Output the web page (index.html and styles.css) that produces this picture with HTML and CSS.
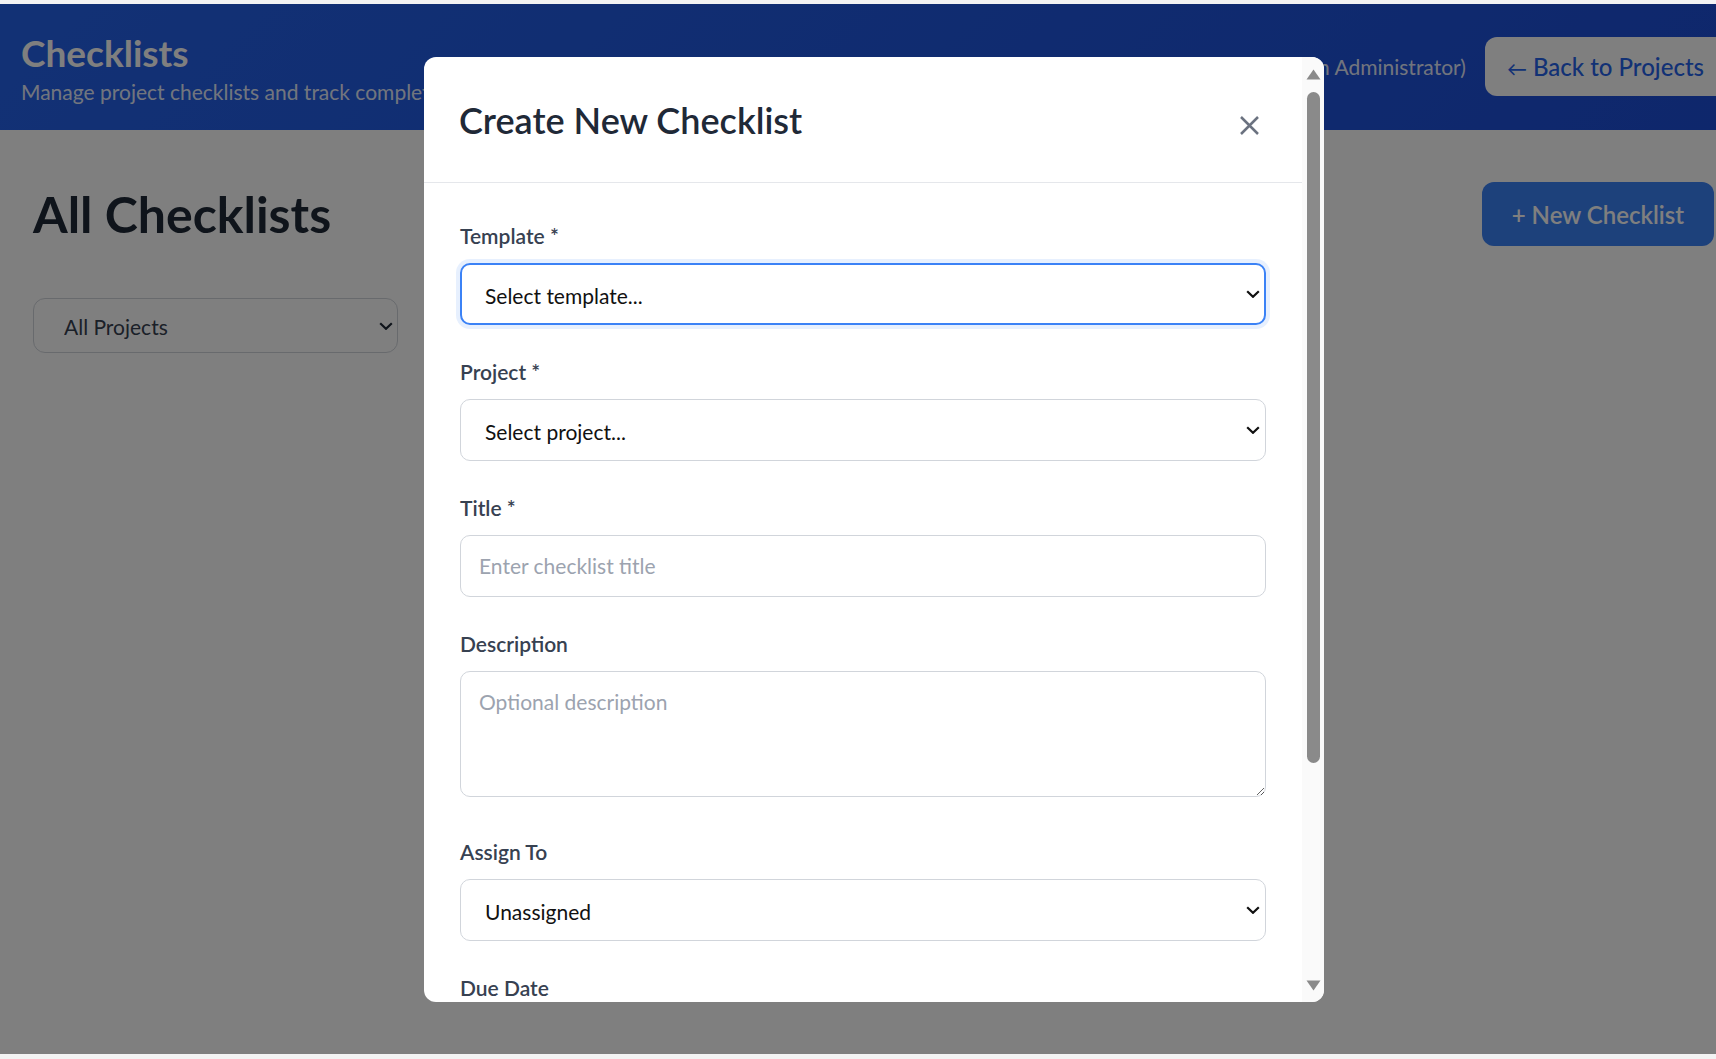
FILE: index.html
```html
<!DOCTYPE html>
<html lang="en">
<head>
<meta charset="utf-8">
<title>Checklists</title>
<link rel="stylesheet" href="styles.css">
</head>
<body>
<div class="viewport">
  <header class="app-header">
    <div class="brand">
      <h1 class="brand-title">Checklists</h1>
      <p class="brand-sub">Manage project checklists and track completion progress</p>
    </div>
    <div class="header-actions">
      <span class="user-info">Welcome, Admin (Admin Administrator)</span>
      <button class="btn-back" type="button"><span class="back-arrow">←</span> Back to Projects</button>
    </div>
  </header>

  <main class="main">
    <div class="title-row">
      <h2 class="page-title">All Checklists</h2>
      <button class="btn-primary" type="button">+ New Checklist</button>
    </div>
    <div class="filters">
      <div class="select-wrap filter-wrap">
        <select class="filter-select"><option>All Projects</option></select>
        <svg class="chevron" width="14" height="8" viewBox="0 0 14 8"><path d="M1.2 1.2 L7 6.8 L12.8 1.2" fill="none" stroke="currentColor" stroke-width="2.2"/></svg>
      </div>
      <div class="select-wrap filter-wrap">
        <select class="filter-select"><option>All Statuses</option></select>
        <svg class="chevron" width="14" height="8" viewBox="0 0 14 8"><path d="M1.2 1.2 L7 6.8 L12.8 1.2" fill="none" stroke="currentColor" stroke-width="2.2"/></svg>
      </div>
    </div>
  </main>

  <div class="overlay">
    <div class="modal">
      <div class="modal-scroll">
        <div class="modal-header">
          <h3 class="modal-title">Create New Checklist</h3>
          <button class="modal-close" type="button" aria-label="Close">
            <svg width="21" height="21" viewBox="0 0 21 21"><path d="M2 2 L19 19 M19 2 L2 19" fill="none" stroke="currentColor" stroke-width="2.5"/></svg>
          </button>
        </div>
        <form class="modal-body">
          <div class="form-group">
            <label class="form-label">Template *</label>
            <div class="select-wrap">
              <select class="form-control form-select is-focused"><option>Select template...</option></select>
              <svg class="chevron" width="14" height="8" viewBox="0 0 14 8"><path d="M1.2 1.2 L7 6.8 L12.8 1.2" fill="none" stroke="currentColor" stroke-width="2.2"/></svg>
            </div>
          </div>
          <div class="form-group">
            <label class="form-label">Project *</label>
            <div class="select-wrap">
              <select class="form-control form-select"><option>Select project...</option></select>
              <svg class="chevron" width="14" height="8" viewBox="0 0 14 8"><path d="M1.2 1.2 L7 6.8 L12.8 1.2" fill="none" stroke="currentColor" stroke-width="2.2"/></svg>
            </div>
          </div>
          <div class="form-group">
            <label class="form-label">Title *</label>
            <input class="form-control form-input" type="text" placeholder="Enter checklist title">
          </div>
          <div class="form-group form-group-tall">
            <label class="form-label">Description</label>
            <textarea class="form-control form-textarea" placeholder="Optional description"></textarea>
          </div>
          <div class="form-group">
            <label class="form-label">Assign To</label>
            <div class="select-wrap">
              <select class="form-control form-select"><option>Unassigned</option></select>
              <svg class="chevron" width="14" height="8" viewBox="0 0 14 8"><path d="M1.2 1.2 L7 6.8 L12.8 1.2" fill="none" stroke="currentColor" stroke-width="2.2"/></svg>
            </div>
          </div>
          <div class="form-group">
            <label class="form-label">Due Date</label>
            <input class="form-control form-input" type="text" placeholder="mm/dd/yyyy">
          </div>
          <div class="modal-footer">
            <button class="btn-secondary" type="button">Cancel</button>
            <button class="btn-primary" type="button">Create Checklist</button>
          </div>
        </form>
      </div>
      <div class="fake-scrollbar" aria-hidden="true">
        <svg class="sb-arrow" width="15" height="11" viewBox="0 0 15 11"><path d="M7.5 0.5 L14.5 10.5 L0.5 10.5 Z" fill="currentColor"/></svg>
        <div class="sb-thumb"></div>
        <svg class="sb-arrow sb-arrow-down" width="15" height="11" viewBox="0 0 15 11"><path d="M0.5 0.5 L14.5 0.5 L7.5 10.5 Z" fill="currentColor"/></svg>
      </div>
    </div>
  </div>
</div>
</body>
</html>
```

FILE: styles.css
```css
* {
  box-sizing: border-box;
}

html,
body {
  margin: 0;
  padding: 0;
  overflow: hidden;
}

body {
  background: #f3f3f3;
  padding-top: 4px;
  font-family: Lato, "Liberation Sans", sans-serif;
  color: #1f2937;
}

.viewport {
  position: relative;
  width: 1748px;
  height: 1050px;
  background: #ffffff;
  overflow: hidden;
}

/* Header */
.app-header {
  display: flex;
  justify-content: space-between;
  align-items: flex-start;
  padding: 27px 21px 22.6px 21px;
  background: linear-gradient(135deg, #2563eb 0%, #1d4ed8 100%);
  color: #ffffff;
}

.brand-title {
  margin: 0;
  font-size: 37px;
  line-height: 44px;
  font-weight: 700;
}

.brand-sub {
  margin: 1px 0 0;
  font-size: 21px;
  line-height: 31.5px;
  color: rgba(255, 255, 255, 0.9);
  white-space: nowrap;
}

.header-actions {
  display: flex;
  align-items: center;
  gap: 19px;
  margin-top: 6px;
}

.user-info {
  font-size: 21px;
  color: rgba(255, 255, 255, 0.9);
}

.btn-back {
  height: 59px;
  padding: 0 23px 0 22px;
  border: none;
  border-radius: 12px;
  background: #ffffff;
  color: #2563eb;
  font-family: inherit;
  font-size: 24px;
  font-weight: 500;
}

.back-arrow {
  font-size: 20px;
}

/* Main */
.main {
  padding: 52px 34px 0 33px;
}

.title-row {
  display: flex;
  justify-content: space-between;
  align-items: center;
}

.page-title {
  margin: 0;
  font-size: 50px;
  line-height: 64px;
  font-weight: 700;
  color: #1f2937;
}

.btn-primary {
  height: 64px;
  padding: 0 30px;
  border: none;
  border-radius: 12px;
  background: #3b82f6;
  color: #ffffff;
  font-family: inherit;
  font-size: 24px;
  font-weight: 600;
}

.filters {
  display: flex;
  gap: 26px;
  margin-top: 52px;
}

.select-wrap {
  position: relative;
}

.chevron {
  position: absolute;
  right: 6px;
  top: 50%;
  transform: translateY(-50%);
  color: #111111;
  pointer-events: none;
}

.filter-wrap {
  width: 365px;
}

.filter-select {
  appearance: none;
  -webkit-appearance: none;
  width: 100%;
  height: 55px;
  padding: 2px 30px 0;
  border: 1px solid #d1d5db;
  border-radius: 12px;
  background: #ffffff;
  color: #374151;
  font-family: inherit;
  font-size: 21px;
}

.filter-wrap .chevron {
  right: 5px;
  color: #1f2937;
}

/* Modal */
.overlay {
  position: absolute;
  inset: 0;
  background: rgba(0, 0, 0, 0.5);
  display: flex;
  align-items: center;
  justify-content: center;
}

.modal {
  width: 900px;
  height: 90%;
  background: #ffffff;
  border-radius: 12px;
  display: flex;
  overflow: hidden;
}

.modal-scroll {
  flex: 1;
  min-width: 0;
  overflow-y: auto;
  scrollbar-width: none;
}

.modal-scroll::-webkit-scrollbar {
  display: none;
}

.modal-header {
  display: flex;
  justify-content: space-between;
  align-items: center;
  padding: 36px 36px 35px 35px;
  border-bottom: 1px solid #e5e7eb;
}

.modal-title {
  margin: 0;
  font-size: 36px;
  line-height: 54px;
  font-weight: 600;
  color: #1f2937;
}

.modal-close {
  width: 34px;
  height: 34px;
  margin-top: 12px;
  padding: 0;
  border: none;
  background: transparent;
  color: #6b7280;
  display: flex;
  align-items: center;
  justify-content: center;
}

.modal-body {
  padding: 38px 36px 36px;
}

.form-group {
  margin-bottom: 32px;
}

.form-group-tall {
  margin-bottom: 40px;
}

.form-label {
  display: block;
  margin-bottom: 12px;
  font-size: 21px;
  line-height: 30px;
  font-weight: 600;
  color: #374151;
}

.form-control {
  display: block;
  width: 100%;
  border: 1px solid #d1d5db;
  border-radius: 10px;
  background: #ffffff;
  color: #111111;
  font-family: inherit;
  font-size: 21px;
  outline: none;
}

.form-control::placeholder {
  color: #9ca3af;
}

.form-select {
  appearance: none;
  -webkit-appearance: none;
  height: 62px;
  padding: 4.5px 24px 0;
}

.form-select.is-focused {
  border: 2px solid #3b82f6;
  padding-left: 23px;
  box-shadow: 0 0 0 4px rgba(59, 130, 246, 0.12);
}

.form-input {
  height: 62px;
  padding: 0 18px;
}

.form-textarea {
  height: 126px;
  padding: 14px 18px;
  line-height: 1.5;
  resize: vertical;
}

.modal-footer {
  display: flex;
  justify-content: flex-end;
  gap: 18px;
  padding-top: 12px;
}

.btn-secondary {
  height: 64px;
  padding: 0 30px;
  border: 1px solid #d1d5db;
  border-radius: 12px;
  background: #ffffff;
  color: #374151;
  font-family: inherit;
  font-size: 24px;
  font-weight: 600;
}

/* Decorative scrollbar */
.fake-scrollbar {
  flex: none;
  width: 22px;
  background: #fafafa;
  display: flex;
  flex-direction: column;
  align-items: center;
  padding: 12px 0 11px;
  color: #8a8a8a;
}

.sb-arrow {
  display: block;
  flex: none;
}

.sb-thumb {
  width: 13px;
  height: 671px;
  margin-top: 12px;
  border-radius: 7px;
  background: #8a8a8a;
}

.sb-arrow-down {
  margin-top: auto;
}
```
